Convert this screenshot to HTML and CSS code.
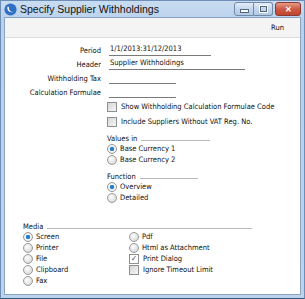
FILE: index.html
```html
<!DOCTYPE html>
<html lang="en">
<head>
    <meta charset="UTF-8">
    <title>Specify Supplier Withholdings</title>
    <link rel="stylesheet" href="styles.css">
</head>
<body>
    <div class="window">
        <div class="titlebar">
            <svg class="app-icon" width="13" height="13" viewBox="0 0 12 12">
                <circle cx="6" cy="6" r="5.6" fill="#2f6fc4"/>
                <path d="M3.2 3.5 C2.4 6.6 5 9.4 8.6 8.2 C6 8.4 4.2 6.6 4.6 3.4 Z" fill="#ffffff"/>
            </svg>
            <span class="title">Specify Supplier Withholdings</span>
            <div class="controls">
                <span class="ctl ctl-min"><i></i></span>
                <span class="ctl ctl-max"><i></i></span>
                <span class="ctl ctl-close">&#10005;</span>
            </div>
        </div>

        <div class="client">
            <div class="toolbar"><span>Run</span></div>

            <div class="form">
                <div class="fields">
                    <label>Period</label>
                    <span class="field w-period">1/1/2013:31/12/2013</span>
                    <label>Header</label>
                    <span class="field w-header">Supplier Withholdings</span>
                    <label>Withholding Tax</label>
                    <span class="field w-short"></span>
                    <label>Calculation Formulae</label>
                    <span class="field w-short"></span>
                </div>

                <div class="checks">
                    <div class="opt"><span class="box"></span>Show Withholding Calculation Formulae Code</div>
                    <div class="opt"><span class="box"></span>Include Suppliers Without VAT Reg. No.</div>
                </div>

                <div class="group values">
                    <div class="group-title"><span>Values in</span></div>
                    <div class="opt"><span class="radio on"></span>Base Currency 1</div>
                    <div class="opt"><span class="radio"></span>Base Currency 2</div>
                </div>

                <div class="group function">
                    <div class="group-title"><span>Function</span></div>
                    <div class="opt"><span class="radio on"></span>Overview</div>
                    <div class="opt"><span class="radio"></span>Detailed</div>
                </div>

                <div class="group media">
                    <div class="group-title"><span>Media</span></div>
                    <div class="media-cols">
                        <div class="col">
                            <div class="opt"><span class="radio on"></span>Screen</div>
                            <div class="opt"><span class="radio"></span>Printer</div>
                            <div class="opt"><span class="radio"></span>File</div>
                            <div class="opt"><span class="radio"></span>Clipboard</div>
                            <div class="opt"><span class="radio"></span>Fax</div>
                        </div>
                        <div class="col">
                            <div class="opt"><span class="radio"></span>Pdf</div>
                            <div class="opt"><span class="radio"></span>Html as Attachment</div>
                            <div class="opt"><span class="box checked">&#10003;</span>Print Dialog</div>
                            <div class="opt"><span class="box"></span>Ignore Timeout Limit</div>
                        </div>
                    </div>
                </div>
            </div>
        </div>
    </div>
</body>
</html>
```

FILE: styles.css
```css
body {
    margin: 0;
    padding: 0;
    background: #ffffff;
    font-family: 'Liberation Sans', Arial, sans-serif;
    color: #111111;
}
.window {
    width: 305px;
    height: 299px;
    box-sizing: border-box;
    background: linear-gradient(#c9dcf1, #b9d1ec 20px, #bcd3ec);
    border: 1px solid #6d8fb5;
    border-bottom-color: #2d5a7e;
    padding: 0 3px 3px 3px;
    display: flex;
    flex-direction: column;
}
.titlebar {
    height: 16px;
    display: flex;
    align-items: center;
}
.app-icon {
    margin: 0 3px 0 0;
}
.title {
    font-size: 10.5px;
    color: #111111;
}
.controls {
    margin-left: auto;
    display: flex;
    align-self: flex-start;
    margin-top: 1px;
}
.ctl {
    height: 12px;
    border: 1px solid #6f89a8;
    display: flex;
    align-items: center;
    justify-content: center;
    background: linear-gradient(#e4edf8, #c4d6ec 50%, #b2c8e4);
}
.ctl-min {
    width: 18px;
    border-radius: 3px 0 0 3px;
}
.ctl-min i {
    width: 7px;
    height: 2px;
    margin-top: 4px;
    background: #ffffff;
    border: 1px solid #55667c;
}
.ctl-max {
    width: 18px;
    border-left: none;
    border-radius: 0 3px 3px 0;
    margin-right: 2px;
}
.ctl-max i {
    width: 5px;
    height: 4px;
    border: 1px solid #55667c;
    outline: 1px solid #ffffff;
}
.ctl-close {
    width: 24px;
    border-color: #8a3a30;
    border-radius: 3px;
    background: linear-gradient(#e69a88, #cc5a44 50%, #c0452e);
    color: #ffffff;
    font-size: 8px;
    font-weight: bold;
}
.client {
    flex: 1;
    background: #ffffff;
    border: 1px solid #8aa4c2;
    display: flex;
    flex-direction: column;
}
.toolbar {
    height: 19px;
    background: #f4f4f4;
    border-bottom: 1px solid #dcdcdc;
    display: flex;
    align-items: center;
    justify-content: flex-end;
    padding-right: 16px;
}
.toolbar, .form {
    font-family: 'DejaVu Sans Condensed', 'DejaVu Sans', sans-serif;
    font-stretch: condensed;
    font-size: 7.5px;
}
.form {
    padding-top: 5px;
}
.fields {
    display: grid;
    grid-template-columns: 96px auto;
    column-gap: 8px;
    grid-auto-rows: 14px;
    align-items: center;
}
.fields label {
    text-align: right;
}
.field {
    display: block;
    height: 11px;
    line-height: 10px;
    border-bottom: 1px solid #7a7a7a;
    padding-left: 1px;
    white-space: nowrap;
}
.w-period { width: 101px; }
.w-header { width: 135px; }
.w-short { width: 66px; }
.checks {
    margin-left: 102px;
}
.checks .opt {
    height: 15px;
}
.opt {
    display: flex;
    align-items: center;
    height: 11px;
    white-space: nowrap;
}
.box {
    width: 8px;
    height: 8px;
    border: 1px solid #8e8f8f;
    background: linear-gradient(135deg, #d6d6d6, #f6f6f6);
    margin-right: 4px;
    flex-shrink: 0;
    display: flex;
    align-items: center;
    justify-content: center;
    font-size: 8px;
    color: #1d3f78;
    line-height: 1;
}
.box.checked {
    background: #ffffff;
}
.radio {
    width: 10px;
    height: 10px;
    box-sizing: border-box;
    border-radius: 50%;
    border: 1px solid #9a9a9a;
    background: radial-gradient(circle at 40% 35%, #ffffff, #cfcfcf);
    margin-right: 3px;
    flex-shrink: 0;
}
.radio.on {
    background: radial-gradient(circle, #1f6fb5 0, #2d8ad8 2px, #ffffff 2.6px, #e4e4e4 4px);
}
.group {
    margin-left: 102px;
}
.group-title {
    display: flex;
    align-items: flex-end;
    height: 12px;
}
.group-title::after {
    content: "";
    flex: 1;
    border-bottom: 1px solid #b9b9b9;
    margin: 0 0 2px 4px;
}
.values {
    width: 103px;
    margin-top: 2px;
}
.function {
    width: 91px;
    margin-top: 4px;
}
.media {
    width: 229px;
    margin: 16px 0 0 18px;
}
.media-cols {
    display: flex;
}
.media-cols .col {
    width: 106px;
}
```
